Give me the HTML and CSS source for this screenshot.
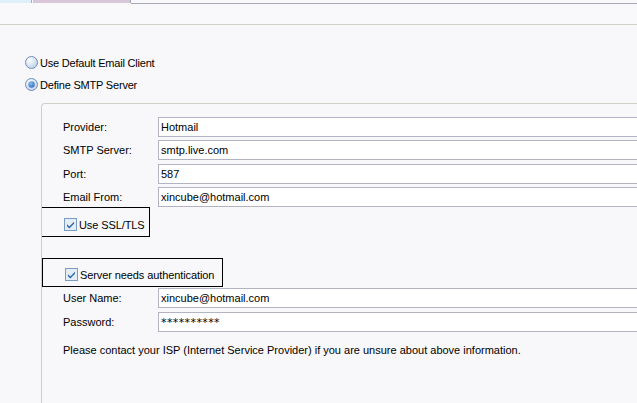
FILE: index.html
```html
<!DOCTYPE html>
<html>
<head>
<meta charset="utf-8">
<link rel="stylesheet" href="styles.css">
</head>
<body>
<div class="page">
  <div class="tabs">
    <div class="tab tab-blue"></div>
    <div class="tab tab-pink"></div>
    <div class="tab-rest"></div>
  </div>
  <div class="options">
    <div class="radio-row">
      <svg class="radio" width="13" height="13" viewBox="0 0 13 13">
        <defs>
          <radialGradient id="rg1" cx="0.35" cy="0.3" r="0.8">
            <stop offset="0" stop-color="#ffffff"/>
            <stop offset="1" stop-color="#b9cde6"/>
          </radialGradient>
        </defs>
        <circle cx="6.5" cy="6.5" r="6" fill="url(#rg1)" stroke="#6f8fb8" stroke-width="1"/>
      </svg>
      <span>Use Default Email Client</span>
    </div>
    <div class="radio-row">
      <svg class="radio" width="13" height="13" viewBox="0 0 13 13">
        <defs>
          <radialGradient id="rg2" cx="0.35" cy="0.3" r="0.8">
            <stop offset="0" stop-color="#ffffff"/>
            <stop offset="1" stop-color="#b9cde6"/>
          </radialGradient>
          <radialGradient id="dot" cx="0.4" cy="0.35" r="0.7">
            <stop offset="0" stop-color="#8fc0f0"/>
            <stop offset="1" stop-color="#2b6cc0"/>
          </radialGradient>
        </defs>
        <circle cx="6.5" cy="6.5" r="6" fill="url(#rg2)" stroke="#6f8fb8" stroke-width="1"/>
        <circle cx="6.5" cy="6.5" r="3.2" fill="url(#dot)"/>
      </svg>
      <span>Define SMTP Server</span>
    </div>
  </div>
  <div class="group">
    <div class="fields">
      <div class="field"><span class="label">Provider:</span><input class="text" value="Hotmail" readonly></div>
      <div class="field"><span class="label">SMTP Server:</span><input class="text" value="smtp.live.com" readonly></div>
      <div class="field"><span class="label">Port:</span><input class="text" value="587" readonly></div>
      <div class="field"><span class="label">Email From:</span><input class="text" value="xincube@hotmail.com" readonly></div>
    </div>
    <div class="mark mark-ssl">
      <div class="check-row">
        <svg class="check" width="13" height="13" viewBox="0 0 13 13">
          <rect x="0.5" y="0.5" width="12" height="12" fill="#e4ecf6" stroke="#7a9cc4"/>
          <path d="M3 6.2 L5.3 8.6 L10 3.8 L10 5.8 L5.3 10.4 L3 8.2 Z" fill="#2a66b0"/>
        </svg>
        <span>Use SSL/TLS</span>
      </div>
    </div>
    <div class="mark mark-auth">
      <div class="check-row">
        <svg class="check" width="13" height="13" viewBox="0 0 13 13">
          <rect x="0.5" y="0.5" width="12" height="12" fill="#e4ecf6" stroke="#7a9cc4"/>
          <path d="M3 6.2 L5.3 8.6 L10 3.8 L10 5.8 L5.3 10.4 L3 8.2 Z" fill="#2a66b0"/>
        </svg>
        <span>Server needs authentication</span>
      </div>
    </div>
    <div class="fields fields-auth">
      <div class="field"><span class="label">User Name:</span><input class="text" value="xincube@hotmail.com" readonly></div>
      <div class="field"><span class="label">Password:</span><input class="text text-pass" value="**********" readonly></div>
    </div>
    <p class="help">Please contact your ISP (Internet Service Provider) if you are unsure about above information.</p>
  </div>
</div>
</body>
</html>
```

FILE: styles.css
```css
html, body {
  margin: 0;
  padding: 0;
  background: #f8f8fa;
  overflow: hidden;
}
body {
  width: 637px;
  height: 403px;
  font-family: "Liberation Sans", Arial, sans-serif;
  font-size: 11px;
  color: #000;
}
.page {
  width: 637px;
  height: 403px;
  overflow: hidden;
}
.tabs {
  display: flex;
  height: 24px;
  border-bottom: 1px solid #d2d0c6;
  background: #f9f9fb;
}
.tab {
  height: 3px;
}
.tab-blue {
  width: 31px;
  background: #dff0f8;
  border-right: 1px solid #a8b0bc;
}
.tab-pink {
  width: 97px;
  margin-left: 1px;
  background: #d9c6d8;
  border-right: 1px solid #a8a8b4;
}
.tab-rest {
  flex: 1;
  height: 3px;
  border-bottom: 1px solid #a8a8b4;
}
.options {
  padding: 31px 0 0 25px;
  display: flex;
  flex-direction: column;
  gap: 9px;
}
.radio-row {
  display: flex;
  align-items: center;
  height: 13px;
  gap: 2px;
  letter-spacing: -0.2px;
}
.radio {
  display: block;
  flex: none;
}
.group {
  margin: 12px 0 0 41px;
  height: 320px;
  border-left: 1px solid #d0d0c8;
  border-top: 1px solid #d0d0c8;
  border-top-left-radius: 4px;
  background: #f8f8fa;
  overflow: hidden;
}
.fields {
  display: flex;
  flex-direction: column;
  gap: 3px;
  padding: 13px 0 0 21px;
}
.fields-auth {
  padding-top: 1px;
}
.field {
  display: flex;
  align-items: center;
  height: 20px;
}
.field + .field {
  margin-top: 0.4px;
}
.label {
  width: 95px;
  flex: none;
}
.text {
  box-sizing: border-box;
  flex: none;
  width: 520px;
  height: 20px;
  margin: 0;
  padding: 0 2px;
  border: 1px solid #b2b4c4;
  background: #ffffff;
  font-family: "Liberation Sans", Arial, sans-serif;
  font-size: 11px;
  color: #000;
  outline: none;
}
.text-pass {
  font-family: "DejaVu Sans", sans-serif;
  font-size: 11px;
  letter-spacing: 0.4px;
  padding-top: 1px;
}
.mark {
  box-sizing: border-box;
  border: 1px solid #000;
}
.mark-ssl {
  margin-left: -1px;
  width: 109px;
  height: 30px;
  padding: 10px 0 0 22px;
}
.mark-auth {
  margin-top: 21px;
  width: 181px;
  height: 29px;
  padding: 9px 0 0 22px;
}
.check-row {
  display: flex;
  align-items: center;
  height: 13px;
  gap: 2px;
  letter-spacing: -0.1px;
}
.check {
  display: block;
  flex: none;
}
.help {
  margin: 12px 0 0 21px;
}
```
